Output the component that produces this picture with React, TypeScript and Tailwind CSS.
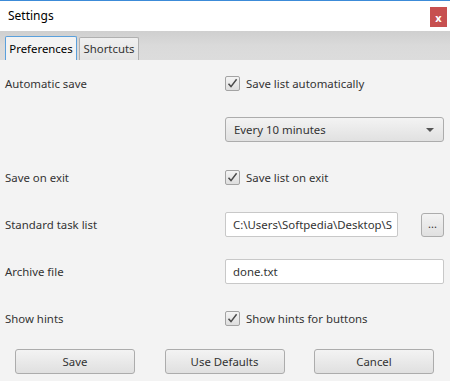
import { useState } from "react";

const font = { fontFamily: '"Noto Sans", "Open Sans", sans-serif' };

function Check({ checked, onToggle, label }: { checked: boolean; onToggle: () => void; label: string }) {
  return (
    <label className="flex items-center gap-[6px] cursor-default select-none" onClick={onToggle}>
      <span className="flex h-[15px] w-[15px] items-center justify-center rounded-[2px] border border-[#a3a3a3] bg-gradient-to-b from-[#f4f4f4] to-[#dedede]">
        {checked && (
          <svg width="11" height="11" viewBox="0 0 11 11">
            <path d="M1.5 5.8 L4 8.6 L9.6 1.2" fill="none" stroke="#4a4a4a" strokeWidth="1.5" />
          </svg>
        )}
      </span>
      <span>{label}</span>
    </label>
  );
}

function Btn({ children }: { children: React.ReactNode }) {
  return (
    <button className="h-[25px] w-[120px] rounded-[3px] border border-[#acacac] bg-gradient-to-b from-[#f3f3f3] to-[#e0e0e0] text-[#333]">
      {children}
    </button>
  );
}

export default function App() {
  const [autoSave, setAutoSave] = useState(true);
  const [onExit, setOnExit] = useState(true);
  const [hints, setHints] = useState(true);

  return (
    <div className="flex h-[381px] w-[450px] flex-col bg-[#f3f3f3] text-[11.4px] text-[#333]" style={font}>
      {/* title bar */}
      <div className="flex h-[31px] items-start justify-between border-t border-[#3c8bd8] bg-white">
        <span className="ml-[8px] mt-[6px] text-[12px] text-black">Settings</span>
        <span className="mr-[3px] mt-[6px] flex h-[20px] w-[17px] items-center justify-center bg-[#c75050] text-[11px] font-bold leading-none text-white">
          x
        </span>
      </div>

      {/* tabs */}
      <div className="flex h-[29px] items-end gap-[2px] bg-gradient-to-b from-[#cfcfcf] via-[#dadada] to-[#dcdcdc] pl-[5px]">
        <div className="flex h-[24px] w-[72px] items-center justify-center rounded-t-[2px] border border-b-0 border-[#5aa0dc] bg-[#f3f3f3] text-black">
          Preferences
        </div>
        <div className="flex h-[23px] w-[60px] items-center justify-center rounded-t-[2px] border border-b-0 border-[#b0b0b0] bg-gradient-to-b from-[#f0f0f0] to-[#e4e4e4]">
          Shortcuts
        </div>
      </div>

      {/* content */}
      <div className="flex flex-col pl-[5px] pr-[6px]">
        <div className="mt-[12px] flex h-[24px] items-center">
          <span className="w-[220px]">Automatic save</span>
          <Check checked={autoSave} onToggle={() => setAutoSave(!autoSave)} label="Save list automatically" />
        </div>

        <div className="mt-[21px] flex">
          <span className="w-[220px]" />
          <div className="flex h-[25px] flex-1 items-center justify-between rounded-[3px] border border-[#acacac] bg-gradient-to-b from-[#f3f3f3] to-[#e1e1e1] pl-[8px] pr-[9px]">
            <span>Every 10 minutes</span>
            <svg width="8" height="4" viewBox="0 0 8 4">
              <path d="M0 0 H8 L4 4 Z" fill="#555" />
            </svg>
          </div>
        </div>

        <div className="mt-[24px] flex h-[24px] items-center">
          <span className="w-[220px]">Save on exit</span>
          <Check checked={onExit} onToggle={() => setOnExit(!onExit)} label="Save list on exit" />
        </div>

        <div className="mt-[22px] flex h-[25px] items-center">
          <span className="w-[220px]">Standard task list</span>
          <div className="flex h-[25px] w-[173px] items-center overflow-hidden whitespace-nowrap rounded-[2px] border border-[#c8c8c8] bg-white pl-[7px]">
            C:\Users\Softpedia\Desktop\S
          </div>
          <button className="ml-auto flex h-[24px] w-[23px] items-start justify-center rounded-[3px] border border-[#acacac] bg-gradient-to-b from-[#f3f3f3] to-[#e0e0e0] pt-[4px] text-[11px] leading-none">
            ...
          </button>
        </div>

        <div className="mt-[22px] flex h-[25px] items-center">
          <span className="w-[220px]">Archive file</span>
          <div className="flex h-[25px] flex-1 items-center rounded-[2px] border border-[#c8c8c8] bg-white pl-[7px]">
            done.txt
          </div>
        </div>

        <div className="mt-[23px] flex h-[24px] items-center">
          <span className="w-[220px]">Show hints</span>
          <Check checked={hints} onToggle={() => setHints(!hints)} label="Show hints for buttons" />
        </div>

        <div className="mt-[18px] flex justify-between pl-[10px] pr-[10px]">
          <Btn>Save</Btn>
          <Btn>Use Defaults</Btn>
          <Btn>Cancel</Btn>
        </div>
      </div>
    </div>
  );
}
